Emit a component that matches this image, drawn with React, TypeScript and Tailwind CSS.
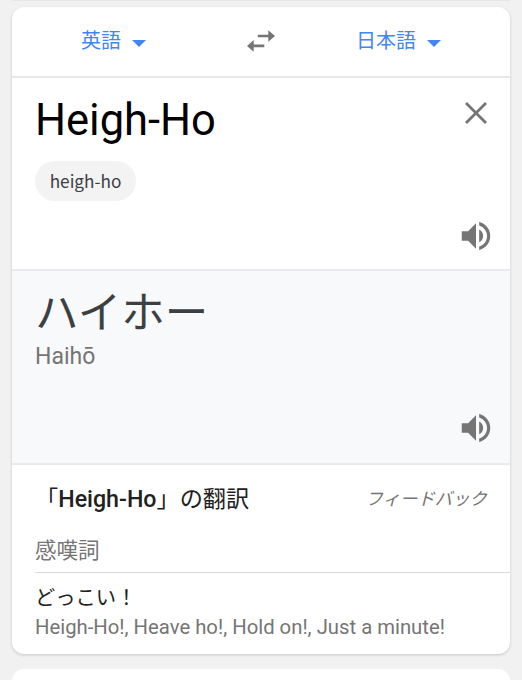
import React from 'react';

interface LanguageButtonProps {
    label: string;
    className?: string;
}

const translations = [
    { word: 'どっこい！', meanings: 'Heigh-Ho!, Heave ho!, Hold on!, Just a minute!' },
];

function LanguageButton({ label, className = '' }: LanguageButtonProps) {
    return (
        <button type="button" className={`flex items-center text-[20px] leading-[30px] text-[#4285f4] ${className}`}>
            <span>{label}</span>
            <svg className="ml-[11px] mt-[4px] h-[7px] w-[14px]" viewBox="0 0 14 7" fill="currentColor">
                <path d="M0 0h14L7 7z" />
            </svg>
        </button>
    );
}

function SwapIcon() {
    return (
        <svg className="h-[22px] w-[28px]" viewBox="0 0 28 22" fill="#757575">
            <path d="M21.3 0.2 28 6 21.3 11.8V7.3H10.7V4.7H21.3z" />
            <path d="M6.7 10.1 0 15.9 6.7 21.7V17.2H17.3V14.6H6.7z" />
        </svg>
    );
}

function CloseIcon() {
    return (
        <svg className="h-[22px] w-[22px]" viewBox="0 0 22 22" fill="none" stroke="#757575" strokeWidth="2.8">
            <path d="M1 1 21 21M21 1 1 21" />
        </svg>
    );
}

function SpeakerIcon() {
    return (
        <svg className="h-[38px] w-[38px]" viewBox="0 0 24 24" fill="#757575">
            <path d="M3 9v6h4l5 5V4L7 9H3zm13.5 3c0-1.77-1.02-3.29-2.5-4.03v8.05c1.48-.73 2.5-2.25 2.5-4.02zM14 3.23v2.06c2.89.86 5 3.54 5 6.71s-2.11 5.85-5 6.71v2.06c4.01-.91 7-4.49 7-8.77s-2.99-7.86-7-8.77z" />
        </svg>
    );
}

export default function App() {
    return (
        <div className="h-[680px] w-[522px] overflow-hidden bg-[#f1f1f1] pl-[12px] pr-[12px] font-['Roboto','Noto_Sans_CJK_JP',sans-serif]">
            <div className="h-px bg-[#e6e6e6]" />
            <main className="mt-[6px] h-[647px] overflow-hidden rounded-[12px] bg-white shadow-[0_1px_3px_rgba(0,0,0,0.18)]">
                <header className="flex h-[71px] items-start border-b-2 border-[#e8e8e8]">
                    <LanguageButton label="英語" className="ml-[69px] mt-[19px]" />
                    <button type="button" className="ml-[101px] mt-[23px]">
                        <SwapIcon />
                    </button>
                    <LanguageButton label="日本語" className="ml-[81px] mt-[19px]" />
                </header>

                <section className="flex h-[193px] justify-between border-b-2 border-[#e8eaed] pl-[23px] pr-[15.5px]">
                    <div>
                        <h1 className="mt-[17px] text-[43.5px] leading-[52px] text-black">Heigh-Ho</h1>
                        <span className="mt-[14px] flex h-[40px] w-[101px] items-center justify-center rounded-full bg-[#f3f3f3] font-['Noto_Sans_CJK_JP',sans-serif] text-[17.2px] text-[#3c4043]">
                            heigh-ho
                        </span>
                    </div>
                    <div className="flex flex-col items-center justify-between pb-[14px] pt-[24px]">
                        <button type="button"><CloseIcon /></button>
                        <button type="button"><SpeakerIcon /></button>
                    </div>
                </section>

                <section className="flex h-[194px] justify-between border-b-2 border-[#e8eaed] bg-[#f8f9fb] pl-[23px] pr-[15.5px]">
                    <div>
                        <h2 className="mt-[13px] text-[43.5px] leading-[60px] text-[#3c4043]">ハイホー</h2>
                        <p className="-mt-px text-[23px] leading-[28px] text-[#757575]">Haihō</p>
                    </div>
                    <div className="flex items-end pb-[16px]">
                        <button type="button"><SpeakerIcon /></button>
                    </div>
                </section>

                <section className="pl-[23px]">
                    <div className="flex items-start justify-between pr-[23px] pt-[17px] text-[#212121]">
                        <h3 className="text-[23.2px] leading-[34px]">
                            「<span className="font-medium">Heigh-Ho</span>」の翻訳
                        </h3>
                        <a className="text-[17.4px] italic leading-[34px] text-[#757575]">フィードバック</a>
                    </div>
                    <div className="mt-[18px] h-[39px] border-b border-[#dcdcdc] text-[21.5px] leading-[34px] text-[#757575]">
                        感嘆詞
                    </div>
                    {translations.map((item) => (
                        <div key={item.word} className="pt-[9px]">
                            <p className="text-[20.3px] leading-[32px] text-[#212121]">{item.word}</p>
                            <p className="text-[20.3px] leading-[26px] text-[#757575]">{item.meanings}</p>
                        </div>
                    ))}
                </section>
            </main>
            <div className="mt-[15px] h-[40px] rounded-t-[12px] bg-white" />
        </div>
    );
}
